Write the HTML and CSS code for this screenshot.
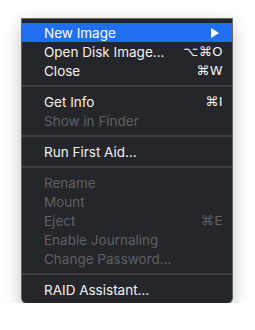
FILE: index.html
```html
<!DOCTYPE html>
<html>
<head>
<meta charset="utf-8">
<link rel="stylesheet" href="styles.css">
</head>
<body>
<div class="menu">
  <div class="item active"><span class="label">New Image</span><span class="arrow"></span></div>
  <div class="item"><span class="label">Open Disk Image…</span><span class="key">⌥⌘O</span></div>
  <div class="item"><span class="label">Close</span><span class="key">⌘W</span></div>
  <div class="sep"></div>
  <div class="item"><span class="label">Get Info</span><span class="key">⌘I</span></div>
  <div class="item disabled"><span class="label">Show in Finder</span></div>
  <div class="sep"></div>
  <div class="item"><span class="label">Run First Aid…</span></div>
  <div class="sep"></div>
  <div class="item disabled"><span class="label">Rename</span></div>
  <div class="item disabled"><span class="label">Mount</span></div>
  <div class="item disabled"><span class="label">Eject</span><span class="key">⌘E</span></div>
  <div class="item disabled"><span class="label">Enable Journaling</span></div>
  <div class="item disabled"><span class="label">Change Password…</span></div>
  <div class="sep"></div>
  <div class="item"><span class="label">RAID Assistant…</span></div>
</div>
</body>
</html>
```
FILE: styles.css
```css
html, body {
  margin: 0;
  padding: 0;
  background: #ffffff;
}
body {
  padding: 19px 0 0 22px;
  font-family: Inter, "Liberation Sans", sans-serif;
}
.menu {
  width: 210px;
  box-sizing: border-box;
  padding: 4px 0;
  background: #25262a;
  border-radius: 0 0 5px 5px;
  box-shadow: 0 0 0 1px rgba(0,0,0,0.55), 0 6px 18px rgba(0,0,0,0.28);
}
.item {
  height: 19px;
  display: flex;
  align-items: center;
  justify-content: space-between;
  padding: 0 9px 0 22px;
  color: #f2f2f3;
  font-size: 13.5px;
}
.item.active {
  background: #1f6ff0;
  color: #ffffff;
}
.item.disabled {
  color: #5f6064;
}
.key {
  font-family: "DejaVu Sans", Inter, sans-serif;
  font-size: 13px;
  letter-spacing: 0.5px;
}
.arrow {
  width: 0;
  height: 0;
  margin-right: 4px;
  border-left: 8px solid #ffffff;
  border-top: 5px solid transparent;
  border-bottom: 5px solid transparent;
}
.sep {
  height: 2px;
  margin: 5px 0;
  background: #3d3e42;
}
```
